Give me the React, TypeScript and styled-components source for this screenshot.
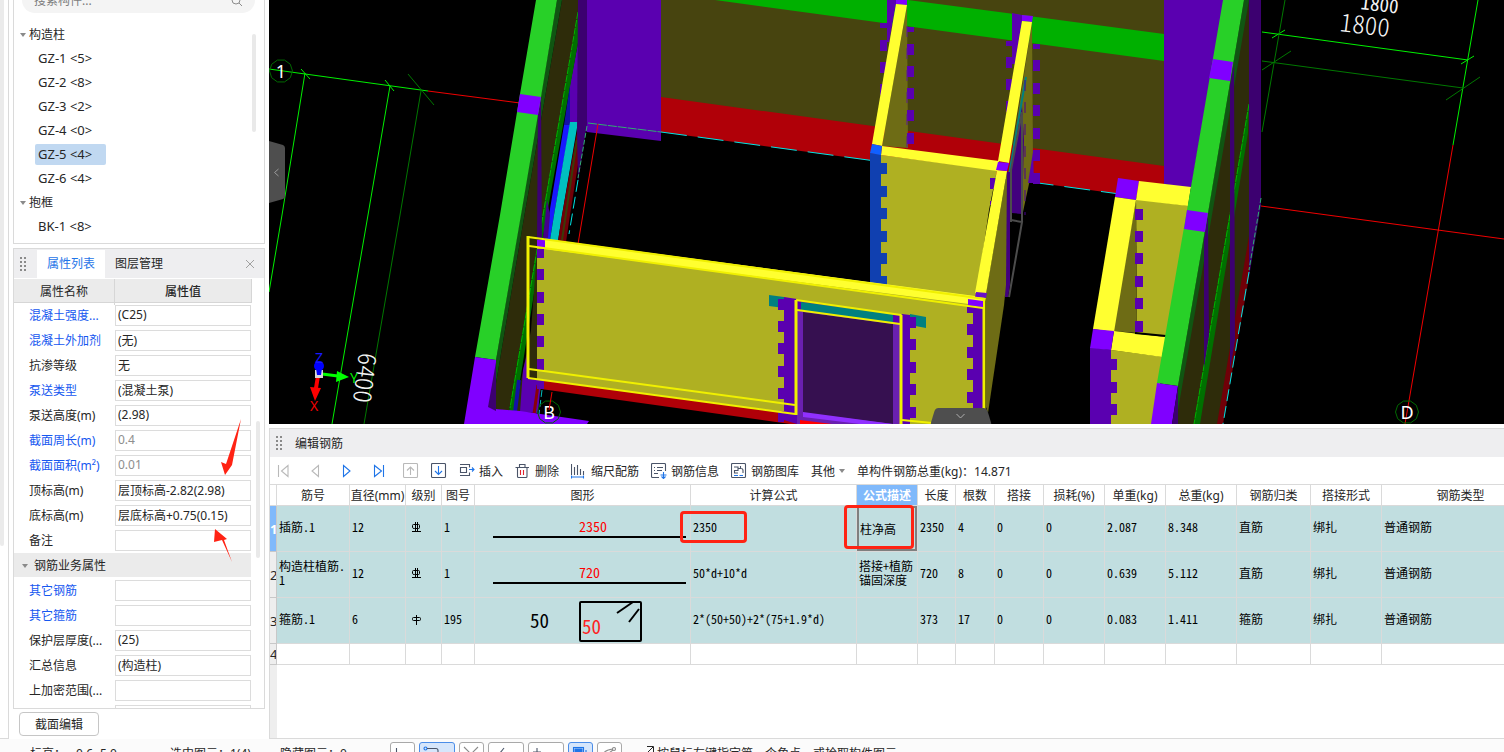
import React, { useId } from "react";
import styled, { createGlobalStyle, css } from "styled-components";

const UI_FONT = '"Noto Sans", "Noto Sans CJK SC", sans-serif';
const GRID_FONT = '"Noto Sans CJK SC", sans-serif';
const LINE = "#dadada";
const BLUE = "#1f75e8";
const MARK = "#ff2314";

const GlobalStyle = createGlobalStyle`
  *, *::before, *::after { box-sizing: border-box; }
  body {
    margin: 0;
    background: #fff;
    color: #262626;
    font: 12px/16px ${UI_FONT};
  }
  button, input {
    font: inherit;
    color: inherit;
    margin: 0;
  }
  button { cursor: pointer; }
`;

/* ---------- page frame ---------- */

const Page = styled.div`
  display: flex;
  flex-direction: column;
  height: 100vh;
  overflow: hidden;
`;

const Body = styled.div`
  flex: 1;
  min-height: 0;
  display: flex;
`;

const Rail = styled.div`
  flex: none;
  width: 9px;
  border-right: 1px solid ${LINE};
  border-bottom: 1px solid ${LINE};
`;

const RailThumb = styled.div`
  width: 4px;
  height: 74%;
  background: #ebebeb;
  border-radius: 0 0 4px 4px;
`;

const Sidebar = styled.aside`
  flex: none;
  width: 260px;
  padding: 0 4px;
  display: flex;
  flex-direction: column;
`;

const Work = styled.main`
  flex: 1;
  min-width: 0;
  display: flex;
  flex-direction: column;
  gap: 4px;
`;

/* ---------- component tree ---------- */

const TreePanel = styled.section`
  position: relative;
  border: 1px solid ${LINE};
  border-top: 0;
  padding-bottom: 5px;
`;

const SearchBox = styled.label`
  display: flex;
  align-items: center;
  height: 26px;
  margin: -13px 9px 9px 8px;
  padding: 2px 12px 0;
  border-radius: 13px;
  background: #f4f4f4;
  color: #8c8c8c;
`;

const SearchInput = styled.input`
  flex: 1;
  min-width: 0;
  border: 0;
  padding: 0;
  background: none;
  outline: none;
  &::placeholder { color: #7c7c7c; opacity: 1; }
`;

const TreeGroup = styled.ul`
  list-style: none;
  margin: 0;
  padding: 0;
`;

const GroupToggle = styled.button`
  display: flex;
  align-items: center;
  gap: 3px;
  height: 24px;
  border: 0;
  padding: 2px 0 0 6px;
  background: none;
`;

const TreeRow = styled.li`
  display: flex;
  align-items: center;
  height: 24px;
  padding-left: 21px;
`;

const TreeItem = styled.button<{ $on?: boolean }>`
  width: 71px;
  height: 21px;
  border: 0;
  border-radius: 2px;
  padding: 0 3px;
  text-align: left;
  font-size: 13px;
  line-height: 20px;
  background: ${(p) => (p.$on ? "#c0d8f1" : "transparent")};
`;

const ScrollThumb = styled.div<{ $top: number; $size: number; $right: number }>`
  position: absolute;
  top: ${(p) => p.$top}px;
  right: ${(p) => p.$right}px;
  width: 4px;
  height: ${(p) => p.$size}px;
  border-radius: 2px;
  background: #e9e9e9;
`;

/* ---------- property panel ---------- */

const PropPanel = styled.section`
  position: relative;
  flex: 1;
  min-height: 0;
  margin-top: 4px;
  border: 1px solid ${LINE};
  display: flex;
  flex-direction: column;
  overflow: hidden;
`;

const PanelHead = styled.header`
  flex: none;
  display: flex;
  align-items: center;
  height: 29px;
  background: #eeeef0;
`;

const Grip = styled.svg`
  flex: none;
  width: 10px;
  height: 16px;
  margin: 0 8px 0 5px;
`;

const Tab = styled.button<{ $on?: boolean }>`
  height: 28px;
  width: 68px;
  border: 0;
  padding: 0;
  background: ${(p) => (p.$on ? "#fff" : "transparent")};
  color: ${(p) => (p.$on ? BLUE : "#262626")};
`;

const CloseButton = styled.button`
  margin-left: auto;
  margin-right: 9px;
  width: 10px;
  height: 16px;
  border: 0;
  padding: 0;
  background: none;
  display: flex;
  align-items: center;
`;

const PropHeadRow = styled.div`
  flex: none;
  display: grid;
  grid-template-columns: 100px 1fr;
  margin: 1px 12px 0 0;
  height: 24px;
  background: #ebebeb;
  border-bottom: 1px solid #d6d6d6;
  border-right: 1px solid #d6d6d6;
  text-align: center;
  line-height: 26px;
  span + span {
    border-left: 1px solid #d6d6d6;
    font-weight: 500;
  }
`;

const PropRows = styled.div`
  flex: 1;
  min-height: 0;
  overflow: hidden;
  padding-right: 13px;
`;

const PropRow = styled.div`
  display: grid;
  grid-template-columns: 86px 1fr;
  align-items: center;
  height: 25px;
  padding-left: 15px;
`;

const PropLabel = styled.label<{ $link?: boolean }>`
  color: ${(p) => (p.$link ? "#1557f0" : "#262626")};
  white-space: nowrap;
`;

const PropInput = styled.input<{ $dim?: boolean }>`
  width: 100%;
  height: 21px;
  border: 1px solid #dcdcdc;
  padding: 0 2px 2px;
  background: #fff;
  outline: none;
  color: ${(p) => (p.$dim ? "#8e8e8e" : "#262626")};
`;

const PropGroup = styled.div`
  display: flex;
  align-items: center;
  gap: 6px;
  height: 24px;
  margin-bottom: 1px;
  padding: 2px 0 0 8px;
  background: #ebebeb;
`;

const MarkLayer = styled.svg`
  position: absolute;
  inset: 0;
  width: 100%;
  height: 100%;
  pointer-events: none;
`;

const SectionButton = styled.button`
  flex: none;
  width: 80px;
  height: 24px;
  margin: 3px 0 3px 6px;
  border: 1px solid #c6c6c6;
  border-radius: 4px;
  padding: 2px 0 0;
  background: #fff;
`;

/* ---------- 3D view ---------- */

const Viewport = styled.section`
  position: relative;
  flex: 1;
  min-height: 0;
  background: #000;
  overflow: hidden;
`;

const Scene = styled.svg`
  display: block;
  width: 100%;
  height: 100%;
`;

const FoldButton = styled.button<{ $side: "left" | "bottom" }>`
  position: absolute;
  border: 0;
  padding: 0;
  background: none;
  display: flex;
  ${(p) =>
    p.$side === "left"
      ? css`
          left: 0;
          top: 141px;
        `
      : css`
          left: 56%;
          bottom: 0;
          transform: translateX(-50%);
        `}
`;

/* ---------- rebar editor ---------- */

const Editor = styled.section`
  flex: none;
  height: 311px;
  border: 1px solid ${LINE};
  border-right: 0;
  display: flex;
  flex-direction: column;
`;

const EditorHead = styled.header`
  flex: none;
  display: flex;
  align-items: center;
  height: 28px;
  background: #eeeef0;
  svg { margin-right: 10px; }
`;

const Title = styled.h2`
  margin: 0;
  padding-top: 2px;
  font-size: 12px;
  font-weight: 400;
`;

const Toolbar = styled.div`
  flex: none;
  display: flex;
  align-items: center;
  gap: 12px;
  height: 27px;
  padding-left: 5px;
  white-space: nowrap;
`;

const NavGroup = styled.div`
  display: flex;
  gap: 16px;
`;

const ToolButton = styled.button`
  display: flex;
  align-items: center;
  gap: 4px;
  border: 0;
  padding: 0;
  background: none;
  svg { flex: none; }
`;

const ToolLabel = styled.span`
  padding-top: 2px;
`;

const GridArea = styled.div`
  flex: 1;
  min-height: 0;
  overflow: hidden;
  border-top: 1px solid ${LINE};
  background: linear-gradient(to right, #eeeeee 7px, #fff 7px);
`;

const Grid = styled.table`
  table-layout: fixed;
  width: 1270px;
  min-width: 100%;
  border-collapse: separate;
  border-spacing: 0;
  background: #fff;
  color: #000;
`;

const HeadCell = styled.th<{ $on?: boolean }>`
  height: 21px;
  border-right: 1px solid ${LINE};
  border-bottom: 1px solid ${LINE};
  padding: 2px 0 0;
  white-space: nowrap;
  font-weight: ${(p) => (p.$on ? 700 : 400)};
  color: ${(p) => (p.$on ? "#fff" : "#262626")};
  background: ${(p) => (p.$on ? "#80b9fb" : "#fff")};
`;

const RowHead = styled.th<{ $on?: boolean }>`
  border-right: 1px solid #c8c8c8;
  border-bottom: 1px solid #c8c8c8;
  padding: 0;
  overflow: hidden;
  font-size: 13px;
  font-weight: ${(p) => (p.$on ? 700 : 400)};
  color: ${(p) => (p.$on ? "#fff" : "#262626")};
  background: ${(p) => (p.$on ? "#80b9fb" : "#eeeeee")};
`;

const Row = styled.tr<{ $empty?: boolean }>`
  height: ${(p) => (p.$empty ? 21 : 46)}px;
  background: ${(p) => (p.$empty ? "#fff" : "#c1dee0")};
`;

const Cell = styled.td<{ $flush?: boolean; $edit?: boolean }>`
  position: relative;
  border-right: 1px solid ${LINE};
  border-bottom: 1px solid ${LINE};
  padding: ${(p) => (p.$flush ? "0" : "0 0 4px 2px")};
  font-family: ${GRID_FONT};
  font-feature-settings: "hwid";
  line-height: 14px;
  white-space: pre-line;
  ${(p) =>
    p.$edit &&
    css`
      box-shadow: inset 0 0 0 2px #7f7f7f;
      padding: 0 0 0 3px;
    `}
  svg { display: block; }
`;

const MarkBox = styled.div<{ $wide?: boolean }>`
  position: absolute;
  z-index: 1;
  left: ${(p) => (p.$wide ? -13 : -11)}px;
  top: ${(p) => (p.$wide ? -1 : 5)}px;
  width: ${(p) => (p.$wide ? 70 : 67)}px;
  height: ${(p) => (p.$wide ? 44 : 32)}px;
  border: 3px solid ${MARK};
  border-radius: 4px;
`;

/* ---------- status bar ---------- */

const StatusBar = styled.footer`
  flex: none;
  height: 13px;
  overflow: hidden;
  background: #fbfbfb;
`;

const StatusInner = styled.div`
  display: flex;
  align-items: flex-start;
  padding: 3px 0 0 30px;
  white-space: nowrap;
`;

const StatusText = styled.span<{ $width: number }>`
  flex: none;
  width: ${(p) => p.$width}px;
  padding-top: 4px;
`;

const StatusTools = styled.div`
  flex: none;
  display: flex;
  gap: 4px;
  width: 254px;
`;

const StatusButton = styled.button<{ $on?: boolean; $wide?: boolean }>`
  width: ${(p) => (p.$wide ? 36 : 25)}px;
  height: 24px;
  border: 1px solid ${(p) => (p.$on ? "#4b8de8" : "#a9a9a9")};
  border-radius: 3px;
  padding: 3px 3px 0;
  background: ${(p) => (p.$on ? "#d6e6fb" : "#fff")};
  display: flex;
`;

/* ---------- small drawings ---------- */

const GripDots = () => (
  <Grip viewBox="0 0 10 16" aria-hidden="true">
    {[1, 5, 9, 13].map((y) => (
      <g key={y} fill="#8a8a8a">
        <rect x="1" y={y} width="2" height="2" />
        <rect x="5" y={y} width="2" height="2" />
      </g>
    ))}
  </Grip>
);

const Caret = () => (
  <svg width="6" height="4" viewBox="0 0 6 4" aria-hidden="true">
    <path d="M0 0h6L3 4z" fill="#8a8a8a" />
  </svg>
);

const Icon = ({ children, color = "#4a5468" }: { children: React.ReactNode; color?: string }) => (
  <svg width="16" height="16" viewBox="0 0 16 16" fill="none" stroke={color} strokeWidth="1.1" aria-hidden="true">
    {children}
  </svg>
);

type Pt = string;
const Poly = ({ p, f }: { p: Pt; f: string }) => <polygon points={p} fill={f} />;

const Teeth = ({ x, w, h = 11, ys, f = "#5a00b0" }: { x: number; w: number; h?: number; ys: number[]; f?: string }) => (
  <g fill={f}>
    {ys.map((y) => (
      <rect key={y} x={x} y={y} width={w} height={h} />
    ))}
  </g>
);

const AxisMark = ({ x, y, label }: { x: number; y: number; label: string }) => (
  <g>
    <polygon
      points={[0, 1, 2, 3, 4, 5, 6, 7, 8, 9]
        .map((i) => `${x + 11.5 * Math.cos((i * Math.PI) / 5)},${y + 11.5 * Math.sin((i * Math.PI) / 5)}`)
        .join(" ")}
      fill="none"
      stroke="#006a00"
    />
    <text x={x} y={y + 7} fill="#fff" fontSize="18" textAnchor="middle" fontFamily="Noto Sans, sans-serif">
      {label}
    </text>
  </g>
);

const Model = () => (
  <Scene viewBox="269 0 1235 424" preserveAspectRatio="xMidYMid slice" role="img" aria-label="三维模型">
    {/* axis lines on the left */}
    <g strokeWidth="1" fill="none">
      <path d="M269 69L428 91M305 73L282 215 269 292M390 86L368 215 332 424M301 69l9 10M385 80l9 11" stroke="#00f000" />
      <path d="M421 91L400 215 364 424M408 74l26 31" stroke="#007800" />
      <path d="M428 91L520 103" stroke="#f00000" />
    </g>
    <AxisMark x={281} y={71} label="1" />

    {/* back wall */}
    <Poly p="661,0 1164,0 1164,170 661,100" f="#47440f" />
    <Poly p="661,97 1164,166 1164,200 661,132" f="#b00008" />
    <Poly p="715,0 908,0 1164,34 1164,61" f="#00b000" />
    <Poly p="578,0 661,0 661,141 587,132 578,122 570,122 570,85 578,43" f="#5a00b0" />
    <Poly p="1164,0 1224,0 1191,189 1164,184" f="#5a00b0" />
    <path d="M588 123L661 132" stroke="#2fae70" strokeDasharray="9 1" />
    <path d="M661 132L1164 200" stroke="#00e5e5" strokeDasharray="26 11" />

    {/* left wall */}
    <Poly p="562,0 578,0 578,17 543,215 509,411 496,409 496,383 525,212" f="#2e2c0a" />
    <Poly p="557,0 562,0 525,212 496,383 496,360 521,212" f="#105512" />
    <Poly p="578,15 578,43 545,225 515,412 509,411 543,213" f="#007000" />
    <path d="M578 12L543 215 510 408" stroke="#00b400" fill="none" strokeDasharray="7 1" />
    <Poly p="570,85 570,125 564,125" f="#1410a8" />
    <Poly p="564,125 570,125 554,215 550,240 545,240 549,215" f="#1818ff" />
    <Poly p="570,122 578,122 562,215 558,241 550,240 554,215" f="#00c0c0" />
    <Poly p="578,126 578,165 570,215 566,242 558,241 562,215" f="#700008" />
    <path d="M577 140L562 240" stroke="#3a3a08" strokeWidth="2" />
    <Poly p="578,0 587,0 587,124 578,182 577,130" f="#3c0070" />
    <path d="M578 180L569 234" stroke="#00e5e5" strokeDasharray="12 5" />
    <path d="M587 126L578 178" stroke="#2fae70" strokeDasharray="5 2" />
    <path d="M598 124L578 244" stroke="#f00000" />
    <Poly p="538,102 541,97 542,245 537,245" f="#3c0070" />
    <Poly p="547,200 550,215 548,238 543,238" f="#45008a" />
    <Poly p="536,0 557,0 541,97 521,215 496,360 475,357 500,215 520,94" f="#28d028" />
    <Poly p="520,94 541,97 538,115 517,112" f="#8000ff" />
    <Poly p="531,330 537,250 538,375 541,390 531,413 515,412" f="#2e2c0a" />
    <Poly p="523,370 528,350 529,378 541,381 538,413 520,412" f="#5a00b0" />
    <path d="M519 380L515 412" stroke="#1410a8" strokeWidth="4" />
    <path d="M538 385L534 414" stroke="#8a0008" strokeWidth="3" />
    <path d="M542 390L539 414" stroke="#00c0c0" strokeDasharray="7 3" />
    <Poly p="475,357 496,360 496,409 520,411 589,421 587,424 464,424" f="#8000ff" />
    <Poly p="496,362 496,411 488,407" f="#3c0070" />

    {/* thin partition, far left */}
    <Poly p="887,0 907,0 907,5 896,4 889,42 887,42" f="#5a00b0" />
    <Teeth x={880} w={7} ys={[40, 62, 84]} />
    <Teeth x={880} w={7} h={5} ys={[23]} />
    <Poly p="896,0 907,0 907,5 896,4" f="#8000ff" />
    <Poly p="907,5 908,148 882,146" f="#6e6c15" />
    <Teeth x={907} w={7} ys={[44, 66, 88, 110, 133]} />
    <Teeth x={907} w={7} h={5} ys={[27]} />
    <path d="M907 26V148" stroke="#5a1a90" strokeDasharray="11 11" />
    <Poly p="896,4 907,5 882,146 872,144" f="#ffff30" />

    {/* thin partition, middle */}
    <Poly p="1012,13 1022,15 1022,21 1015,64 1012,64" f="#5a00b0" />
    <Teeth x={1006} w={6} ys={[57, 79, 101]} />
    <Teeth x={1006} w={6} h={5} ys={[41]} />
    <Poly p="1022,15 1033,16 1032,22 1022,21" f="#8000ff" />
    <Poly p="1032,22 1033,165 1023,212 1005,200" f="#6e6c15" />
    <Poly p="1022,105 1024,140 1022,214 1012,213 1010,170" f="#42007e" />
    <path d="M1026 77L1009 175 1005 205" stroke="#008080" strokeWidth="2" fill="none" />
    <path d="M1022 112L1011 170V222M1022 115V222" stroke="#4c4c4c" strokeWidth="2" fill="none" />
    <path d="M1025 80V215" stroke="#4a0090" strokeDasharray="11 11" />
    <Teeth x={1033} w={7} ys={[60, 83, 105, 128, 150, 173]} />
    <Teeth x={1033} w={7} h={5} ys={[44]} />
    <Poly p="1033,152 1034,183 1028,183" f="#5a00b0" />
    <path d="M1011 220L1022 222 1009 297" stroke="#4c4c4c" strokeWidth="2" fill="none" />
    <Poly p="1006,172 1010,172 1010,285 1008,297 1005,297" f="#42007e" />
    <Poly p="1022,21 1032,22 1009,163 998,161" f="#ffff30" />

    {/* middle room */}
    <Poly p="881,155 997,170 989,210 976,298 887,290 881,284" f="#afb022" />
    <Poly p="870,153 881,154 881,284 870,284" f="#1040b0" />
    <Teeth x={881} w={6} ys={[163, 186, 208, 231, 253]} f="#1040b0" />
    <Teeth x={881} w={6} h={9} ys={[276]} f="#1040b0" />
    <Poly p="882,146 999,161 997,171 881,155" f="#ffff30" />
    <Poly p="872,144 882,146 881,155 870,153" f="#1060ff" />
    <Teeth x={990} w={5} ys={[178]} />
    <Teeth x={990} w={2} h={4} ys={[201]} />
    <Poly p="1007,171 1006,285 1004,305 988,413 986,407 986,293" f="#6e6c15" />
    <Poly p="997,170 1007,171 986,294 975,293" f="#ffff30" />
    <Poly p="998,162 1009,163 1007,171 996,170" f="#8000ff" />

    {/* front wall */}
    <Poly p="541,380 797,414 800,424 790,424 541,389" f="#b00008" />
    <Poly p="537,246 984,303 984,424 797,424 797,414 537,379" f="#afb022" />
    <Teeth x={537} w={7} ys={[269, 292, 314, 336, 359]} />
    <Teeth x={537} w={7} h={9} ys={[249, 380]} />
    <Poly p="545,239 975,296 986,297 984,306 545,249" f="#ffff30" />
    <Poly p="537,240 545,240 545,248 537,247" f="#8000ff" />
    <Poly p="769,295 784,297 784,308 769,306" f="#008080" />
    <Poly p="910,314 926,317 926,328 910,325" f="#008080" />
    <Poly p="784,297 797,299 797,424 784,420" f="#5a00b0" />
    <Teeth x={778} w={6} ys={[299, 321, 343, 366, 388, 411]} />
    <Poly p="902,314 910,315 910,424 902,424" f="#5a00b0" />
    <Teeth x={910} w={6} ys={[317, 339, 362, 384, 407]} />
    <Poly p="973,307 984,308 984,424 973,424" f="#5a00b0" />
    <Teeth x={967} w={6} ys={[324, 347, 369, 392]} />
    <Teeth x={967} w={6} h={6} ys={[307]} />
    <Poly p="976,292 987,293 986,298 975,297" f="#6a10c8" />

    {/* door */}
    <Poly p="797,300 900,315 900,424 797,424" f="#5a00b0" />
    <Poly p="801,302 893,314 893,323 801,310" f="#008080" />
    <Poly p="797,311 900,324 900,424 797,424" f="#6a20b0" />
    <Poly p="803,312 893,324 893,424 803,413" f="#361050" />
    <Poly p="803,412 893,424 860,424 803,417" f="#9030ff" />
    <Poly p="800,420 832,424 800,424" f="#ff0000" />

    {/* selection outline */}
    <g stroke="#f0f000" strokeWidth="2" fill="none">
      <path d="M528 237L985 299M529 246L983 308" />
      <path d="M528 236V378M984 298V424" strokeWidth="3" />
      <path d="M528 378L795 414M529 369L795 405" />
      <path d="M796 300L901 315M797 310L900 324M902 420L932 423" />
      <path d="M796 415V300M901 315V424" strokeWidth="3" />
    </g>
    <Poly p="968,299 983,301 983,307 968,305" f="#8000ff" />
    <AxisMark x={549} y={412} label="B" />
    <path d="M552 392L549 410" stroke="#f00000" />

    {/* right room */}
    <Poly p="1136,199 1190,206 1166,337 1137,333" f="#afb022" />
    <Poly p="1136,199 1137,333 1113,331" f="#6e6c15" />
    <Teeth x={1135} w={8} ys={[209, 231, 253, 276, 298, 321]} />
    <Poly p="1118,178 1139,181 1136,200 1115,197" f="#8000ff" />
    <Poly p="1139,181 1191,187 1188,206 1136,200" f="#ffff30" />
    <Poly p="1115,197 1136,200 1114,332 1093,329" f="#ffff30" />
    <Poly p="1111,350 1164,357 1154,424 1111,424" f="#afb022" />
    <Poly p="1114,331 1166,337 1162,357 1111,350" f="#ffff30" />
    <path d="M1135 333L1166 336" stroke="#000" strokeWidth="2" />
    <Poly p="1090,347 1111,350 1111,424 1090,424" f="#5a00b0" />
    <Poly p="1093,329 1114,331 1111,350 1090,348" f="#8000ff" />
    <Teeth x={1111} w={6} ys={[359, 382, 404]} />

    {/* right wall */}
    <Poly p="1248,0 1250,0 1250,240 1218,424 1178,424 1178,405" f="#2e2c0a" />
    <Poly p="1244,0 1249,0 1212,215 1178,410 1178,386 1208,212" f="#105512" />
    <Poly p="1249,104 1248,133 1200,424 1194,424 1234,190" f="#007000" />
    <path d="M1249 104L1194 424" stroke="#00b400" strokeDasharray="7 1" />
    <Poly p="1249,236 1249,277 1223,424 1217,424" f="#700008" />
    <Poly p="1249,0 1261,0 1261,205 1249,277" f="#3c0070" />
    <Poly p="1230,85 1234,65 1235,340 1230,370" f="#3c0070" />
    <Poly p="1204,240 1208,215 1209,335 1204,368" f="#3c0070" />
    <path d="M1261 198L1249 270" stroke="#2fae70" strokeDasharray="5 2" />
    <path d="M1249 272L1223 424" stroke="#00e5e5" strokeDasharray="12 5" />
    <Poly p="1223,0 1244,0 1208,213 1178,386 1157,383 1187,210" f="#28d028" />
    <Poly p="1213,59 1233,62 1230,81 1209,78" f="#8000ff" />
    <Poly p="1187,210 1208,213 1205,232 1184,229" f="#8000ff" />
    <Poly p="1157,383 1178,386 1172,424 1151,424" f="#8000ff" />
    <Poly p="1178,386 1178,424 1172,424" f="#3c0070" />

    {/* axis lines on the right */}
    <g fill="none">
      <path d="M1262 32L1468 60M1478 0L1453 145M1272 38l13 -8M1461 64l13 -8" stroke="#00f000" />
      <path d="M1262 61L1463 88M1285 0L1262 132M1262 70l29 -19M1446 100l34 -23" stroke="#007800" />
      <path d="M1453 145L1405 424M1261 206L1504 239" stroke="#f00000" />
    </g>
    <AxisMark x={1407} y={412} label="D" />
    <g fill="#f4f4f4" fontFamily="Noto Sans CJK SC, sans-serif" fontWeight="300" style={{ fontFeatureSettings: '"hwid"' }}>
      <text fontSize="25" transform="translate(1339 31) rotate(7)">1800</text>
      <text fontSize="19" fontWeight="400" transform="translate(1360 9) rotate(7)">1800</text>
      <text fontSize="25" transform="translate(359 352) rotate(97)">6400</text>
    </g>

    {/* coordinate gizmo */}
    <path d="M318 376L315 394" stroke="#f00" strokeWidth="4" />
    <path d="M310 387l11 1-6 13z" fill="#f00" />
    <path d="M322 374L338 376" stroke="#0f0" strokeWidth="3" />
    <path d="M337 371l12 6-13 5z" fill="#0f0" />
    <rect x="315" y="370" width="8" height="8" fill="#d8d8d8" />
    <circle cx="319" cy="366" r="5" fill="#00f" />
    <path d="M316 368h6l-1 7h-4z" fill="#00f" />
    <g fontSize="14" fontFamily="Noto Sans, sans-serif" textAnchor="middle">
      <text x="319" y="363" fill="#1818ff">Z</text>
      <text x="354" y="383" fill="#00f000">Y</text>
      <text x="314" y="411" fill="#f00000">X</text>
    </g>
  </Scene>
);

/* ---------- data ---------- */

const tree = [
  { name: "构造柱", items: ["GZ-1 <5>", "GZ-2 <8>", "GZ-3 <2>", "GZ-4 <0>", "GZ-5 <4>", "GZ-6 <4>"] },
  { name: "抱框", items: ["BK-1 <8>"] },
];

type Prop = { label: string; value?: string; link?: boolean; dim?: boolean; group?: boolean };
const props: Prop[] = [
  { label: "混凝土强度...", value: "(C25)", link: true },
  { label: "混凝土外加剂", value: "(无)", link: true },
  { label: "抗渗等级", value: "无" },
  { label: "泵送类型", value: "(混凝土泵)", link: true },
  { label: "泵送高度(m)", value: "(2.98)" },
  { label: "截面周长(m)", value: "0.4", link: true, dim: true },
  { label: "截面面积(m²)", value: "0.01", link: true, dim: true },
  { label: "顶标高(m)", value: "层顶标高-2.82(2.98)" },
  { label: "底标高(m)", value: "层底标高+0.75(0.15)" },
  { label: "备注", value: "" },
  { label: "钢筋业务属性", group: true },
  { label: "其它钢筋", value: "", link: true },
  { label: "其它箍筋", value: "", link: true },
  { label: "保护层厚度(...", value: "(25)" },
  { label: "汇总信息", value: "(构造柱)" },
  { label: "上加密范围(...", value: "" },
  { label: "", value: "" },
];

const columns: [string, number][] = [
  ["筋号", 73], ["直径(mm)", 56], ["级别", 36], ["图号", 33], ["图形", 216], ["计算公式", 166],
  ["公式描述", 61], ["长度", 38], ["根数", 39], ["搭接", 49], ["损耗(%)", 61], ["单重(kg)", 61],
  ["总重(kg)", 71], ["钢筋归类", 74], ["搭接形式", 71], ["钢筋类型", 158],
];

type Bar = {
  name: string; dia: string; ribbed: boolean; code: string; shape: string; formula: string; desc: string;
  rest: string[];
};
const bars: Bar[] = [
  { name: "插筋.1", dia: "12", ribbed: true, code: "1", shape: "2350", formula: "2350", desc: "柱净高",
    rest: ["2350", "4", "0", "0", "2.087", "8.348", "直筋", "绑扎", "普通钢筋"] },
  { name: "构造柱植筋.\n1", dia: "12", ribbed: true, code: "1", shape: "720", formula: "50*d+10*d", desc: "搭接+植筋\n锚固深度",
    rest: ["720", "8", "0", "0", "0.639", "5.112", "直筋", "绑扎", "普通钢筋"] },
  { name: "箍筋.1", dia: "6", ribbed: false, code: "195", shape: "", formula: "2*(50+50)+2*(75+1.9*d)", desc: "",
    rest: ["373", "17", "0", "0", "0.083", "1.411", "箍筋", "绑扎", "普通钢筋"] },
];

const Grade = ({ ribbed }: { ribbed: boolean }) => (
  <svg width="16" height="12" viewBox="0 0 16 12" fill="none" stroke="#000" aria-label={ribbed ? "HRB400" : "HPB300"}>
    {ribbed ? (
      <path d="M5.500 3.500h5q1 0 1 1v2q0 1-1 1h-4q-2 0-2-1v-2q0-1 1-1M7.500 1v10M9.500 1v10M4 10.500h9" />
    ) : (
      <path d="M5.500 4.500h6q1 0 1 1v1q0 1-1 1h-6q-1 0-1-1v-1q0-1 1-1M8.500 2v10" />
    )}
  </svg>
);

const Shape = ({ length }: { length: string }) => (
  <svg width="215" height="45" viewBox="0 0 215 45">
    {length ? (
      <>
        <text x="104" y="26" fontSize="14" fill="#f00">{length}</text>
        <path d="M18 31h193" stroke="#000" strokeWidth="2" />
      </>
    ) : (
      <g fill="none" stroke="#000" strokeWidth="2">
        <text x="55" y="30" fontSize="19" fill="#000" stroke="none">50</text>
        <text x="107" y="36" fontSize="19" fill="#f22" stroke="none">50</text>
        <rect x="105" y="4" width="61" height="39" rx="1" />
        <path d="M142 15l16-11M154 24l10-13" />
      </g>
    )}
  </svg>
);

/* ---------- page sections ---------- */

const ComponentTree = () => (
  <TreePanel aria-label="构件列表">
    <SearchBox>
      <SearchInput placeholder="搜索构件..." aria-label="搜索构件" />
      <svg width="12" height="12" viewBox="0 0 12 12" fill="none" stroke="#8c8c8c" aria-hidden="true">
        <circle cx="5" cy="5" r="4" />
        <path d="M8 8l3 3" />
      </svg>
    </SearchBox>
    {tree.map((g) => (
      <div key={g.name}>
        <GroupToggle>
          <Caret />
          {g.name}
        </GroupToggle>
        <TreeGroup>
          {g.items.map((t) => (
            <TreeRow key={t}>
              <TreeItem $on={t.startsWith("GZ-5")}>{t}</TreeItem>
            </TreeRow>
          ))}
        </TreeGroup>
      </div>
    ))}
    <ScrollThumb $top={34} $size={98} $right={8} />
  </TreePanel>
);

const PropertyField = ({ item }: { item: Prop }) => {
  const id = useId();
  return (
    <PropRow>
      <PropLabel htmlFor={id} $link={item.link}>{item.label}</PropLabel>
      <PropInput id={id} defaultValue={item.value} $dim={item.dim} />
    </PropRow>
  );
};

const PropertyPanel = () => (
  <PropPanel>
    <PanelHead>
      <GripDots />
      <Tab $on>属性列表</Tab>
      <Tab>图层管理</Tab>
      <CloseButton aria-label="关闭">
        <svg width="10" height="10" viewBox="0 0 10 10" stroke="#a0a0a0" aria-hidden="true">
          <path d="M1 1l8 8M9 1l-8 8" />
        </svg>
      </CloseButton>
    </PanelHead>
    <PropHeadRow>
      <span>属性名称</span>
      <span>属性值</span>
    </PropHeadRow>
    <PropRows>
      {props.map((p, i) =>
        p.group ? (
          <PropGroup key={i}>
            <Caret />
            {p.label}
          </PropGroup>
        ) : (
          <PropertyField key={i} item={p} />
        )
      )}
    </PropRows>
    <ScrollThumb $top={172} $size={137} $right={4} />
    <MarkLayer aria-hidden="true">
      <path d="M227 170L218 216 211 226 207 213 212 215Z" fill={MARK} />
      <path d="M218 313L208 291 200 293 201 280 213 290 210 291Z" fill={MARK} />
    </MarkLayer>
  </PropPanel>
);

const RebarToolbar = () => (
  <Toolbar role="toolbar">
    <NavGroup>
      <ToolButton aria-label="第一条">
        <Icon color="#b9b9b9"><path d="M3.500 2v12M13 2.500v11L6.500 8z" /></Icon>
      </ToolButton>
      <ToolButton aria-label="上一条">
        <Icon color="#b9b9b9"><path d="M11.500 2.500v11L5 8z" /></Icon>
      </ToolButton>
      <ToolButton aria-label="下一条">
        <Icon color={BLUE}><path d="M4.500 2.500v11L11 8z" /></Icon>
      </ToolButton>
      <ToolButton aria-label="最后一条">
        <Icon color={BLUE}><path d="M3.500 2.500v11L10.500 8zM12.500 2v12" /></Icon>
      </ToolButton>
      <ToolButton aria-label="上移">
        <Icon color="#b9b9b9"><rect x=".5" y=".5" width="14" height="14" rx="1" /><path d="M7.500 12V4M4 7.500L7.500 4 11 7.500" /></Icon>
      </ToolButton>
    </NavGroup>
    <ToolButton aria-label="下移">
      <Icon><rect x=".5" y=".5" width="14" height="14" rx="1" /><path d="M7.500 3v8M4 8l3.500 3.500L11 8" stroke={BLUE} /></Icon>
    </ToolButton>
    <ToolButton>
      <Icon><path d="M1 1.500h9.500v3M1.500 4.500h6v5h-6zM1 12.500h9.500v-3" /><path d="M10 6.500h5M13 4.500l2 2-2 2" stroke={BLUE} /></Icon>
      <ToolLabel>插入</ToolLabel>
    </ToolButton>
    <ToolButton>
      <Icon><path d="M.5 4.500h13.500M4.500 4V1.500h5.500V4M2.500 5v8.500q0 1 1 1h7.500q1 0 1-1V5" /><path d="M5.500 7v5M8.500 7v5" stroke="#e0232e" /></Icon>
      <ToolLabel>删除</ToolLabel>
    </ToolButton>
    <ToolButton>
      <Icon><path d="M.5 1v11M3.500 4v8M6.500 2v10M9.500 6v6M12.500 8v4" /><path d="M0 14h13M.5 12.500v3M12.500 12.500v3" stroke={BLUE} /></Icon>
      <ToolLabel>缩尺配筋</ToolLabel>
    </ToolButton>
    <ToolButton>
      <Icon><path d="M8 14.500H1.500q-1 0-1-1V1.500q0-1 1-1h12q1 0 1 1V8M3 4.500h1M6 4.500h6M3 7.500h1M6 7.500h5M3 10.500h4" /><path d="M12.500 9v6M9.500 12h6M10.500 13.500l2 2 2-2" stroke={BLUE} /></Icon>
      <ToolLabel>钢筋信息</ToolLabel>
    </ToolButton>
    <ToolButton>
      <Icon><rect x=".5" y=".5" width="14" height="14" rx="1" /><path d="M3 4h4v3.500H3.500V10H7M7 5.500h3q2 0 2 2V10M9.500 3v2.500" /><path d="M3 12.500h4M8.500 12.500h3.500" stroke={BLUE} /></Icon>
      <ToolLabel>钢筋图库</ToolLabel>
    </ToolButton>
    <ToolButton>
      <ToolLabel>其他</ToolLabel>
      <Caret />
    </ToolButton>
    <ToolLabel>单构件钢筋总重(kg)：14.871</ToolLabel>
  </Toolbar>
);

const RebarTable = () => (
  <GridArea>
    <Grid>
      <colgroup>
        <col width={7} />
        {columns.map(([name, w]) => (
          <col key={name} width={w} />
        ))}
      </colgroup>
      <thead>
        <tr>
          <HeadCell />
          {columns.map(([name]) => (
            <HeadCell key={name} scope="col" $on={name === "公式描述"}>{name}</HeadCell>
          ))}
        </tr>
      </thead>
      <tbody>
        {bars.map((b, i) => (
          <Row key={b.name}>
            <RowHead scope="row" $on={i === 0}>{i + 1}</RowHead>
            <Cell>{b.name}</Cell>
            <Cell>{b.dia}</Cell>
            <Cell><Grade ribbed={b.ribbed} /></Cell>
            <Cell>{b.code}</Cell>
            <Cell $flush><Shape length={b.shape} /></Cell>
            <Cell>{b.formula}{i === 0 && <MarkBox />}</Cell>
            <Cell $edit={i === 0}>{b.desc}{i === 0 && <MarkBox $wide />}</Cell>
            {b.rest.map((v, k) => (
              <Cell key={k}>{v}</Cell>
            ))}
          </Row>
        ))}
        <Row $empty>
          <RowHead scope="row">4</RowHead>
          {columns.map(([name]) => (
            <Cell key={name} />
          ))}
        </Row>
      </tbody>
    </Grid>
  </GridArea>
);

const Status = () => (
  <StatusBar>
    <StatusInner>
      <StatusText $width={140}>标高：&nbsp; -0.6~5.0</StatusText>
      <StatusText $width={110}>选中图元：1(4)</StatusText>
      <StatusText $width={110}>隐藏图元：0</StatusText>
      <StatusTools>
        <StatusButton aria-label="正交"><Icon><path d="M2.500 2v12h12" /></Icon></StatusButton>
        <StatusButton aria-label="捕捉" $on $wide><Icon><circle cx="2.500" cy="2.500" r="1.500" stroke={BLUE} /><path d="M4 2.500h9q2 0 2 2V14" /></Icon></StatusButton>
        <StatusButton aria-label="交点"><Icon color="#8a8a8a"><path d="M1 1l14 14M15 1L1 15" /></Icon></StatusButton>
        <StatusButton aria-label="垂点" $wide><Icon><path d="M12 2L4 12" /></Icon></StatusButton>
        <StatusButton aria-label="偏移" $wide><Icon><path d="M5 2v10M1 6h8" /></Icon></StatusButton>
        <StatusButton aria-label="显示" $on><Icon color={BLUE}><rect x="1.500" y="1.500" width="10" height="9" /><rect x="3" y="3" width="7" height="7" fill={BLUE} /><path d="M14 4v9" /></Icon></StatusButton>
        <StatusButton aria-label="线段"><Icon color="#8a8a8a"><path d="M2 10q0-6 10-7M4 10l8-6" /><circle cx="13" cy="3" r="1.500" /></Icon></StatusButton>
      </StatusTools>
      <svg width="13" height="14" viewBox="0 0 13 14" fill="none" stroke="#262626" aria-hidden="true">
        <path d="M2 12L9 5M3 4.500h6.500V11" />
      </svg>
      <StatusText $width={260}>按鼠标左键指定第一个角点，或拾取构件图元</StatusText>
    </StatusInner>
  </StatusBar>
);

export default function App() {
  return (
    <Page>
      <GlobalStyle />
      <Body>
        <Rail>
          <RailThumb />
        </Rail>
        <Sidebar>
          <ComponentTree />
          <PropertyPanel />
          <SectionButton>截面编辑</SectionButton>
        </Sidebar>
        <Work>
          <Viewport>
            <Model />
            <FoldButton $side="left" aria-label="收起侧栏">
              <svg width="16" height="62" viewBox="0 0 16 62" aria-hidden="true">
                <path d="M0 0L14 4q2 1 2 3v48q0 2-2 3L0 62z" fill="#4e4e4e" />
                <path d="M9.500 28L5.500 31.500 9.500 35" fill="none" stroke="#9a9a9a" />
              </svg>
            </FoldButton>
            <FoldButton $side="bottom" aria-label="收起面板">
              <svg width="61" height="16" viewBox="0 0 61 16" aria-hidden="true">
                <path d="M0 16L4 3q1-3 4-3h45q3 0 4 3l4 13z" fill="#4e4e4e" />
                <path d="M26 6l4 4 4-4" fill="none" stroke="#b0b0b0" />
              </svg>
            </FoldButton>
          </Viewport>
          <Editor>
            <EditorHead>
              <GripDots />
              <Title>编辑钢筋</Title>
            </EditorHead>
            <RebarToolbar />
            <RebarTable />
          </Editor>
        </Work>
      </Body>
      <Status />
    </Page>
  );
}
